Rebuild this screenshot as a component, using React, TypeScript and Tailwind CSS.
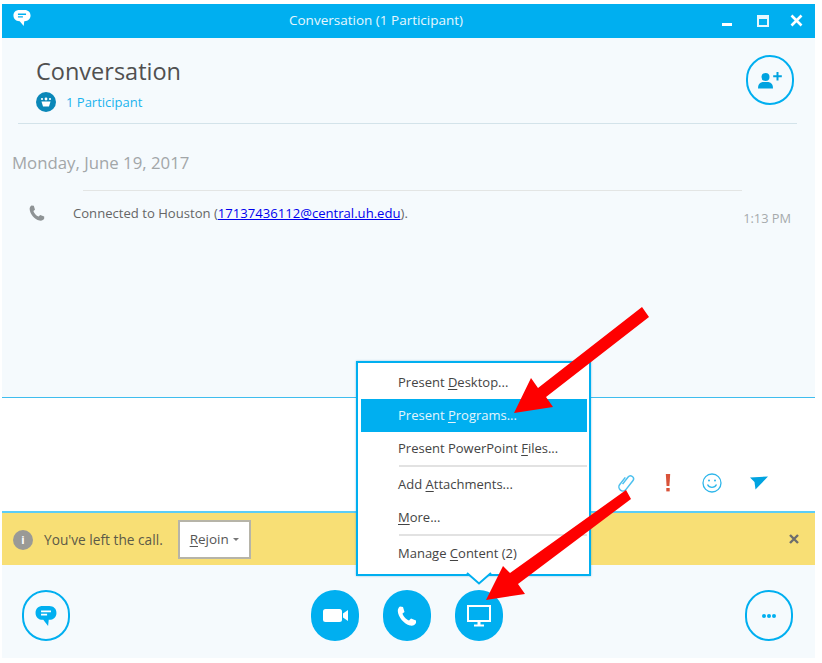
const BLUE = '#00aff0'

function ChatGlyph({ fill, lines, className }: { fill: string; lines: string; className?: string }) {
  return (
    <svg viewBox="0 0 20 20" className={className}>
      <path d="M7 1h6c3.800 0 6.500 2.500 6.500 6.200S16.800 13.500 13 13.500h-.5l-.6 5.500-4.400-5.500H7C3.200 13.500.5 11 .5 7.200S3.200 1 7 1z" fill={fill} />
      <path d="M5.500 5.800h9M5.500 8.800h5.500" stroke={lines} strokeWidth="1.500" fill="none" />
    </svg>
  )
}

function RoundButton({ filled, className, children }: { filled?: boolean; className?: string; children: React.ReactNode }) {
  return (
    <div
      className={
        filled
          ? 'flex h-[51px] w-[48px] shrink-0 items-center justify-center rounded-full bg-[#00aff0] ' + (className ?? '')
          : 'flex h-[51px] w-[48px] shrink-0 items-center justify-center rounded-full border-2 border-[#00aff0] ' + (className ?? '')
      }
    >
      {children}
    </div>
  )
}

function MenuItem({ pre, u, post, active, h }: { pre: string; u: string; post: string; active?: boolean; h: string }) {
  return (
    <div
      className={
        active
          ? 'flex items-center bg-[#00aff0] pl-[37px] pt-[1px] text-[#e3f5fd] ' + h
          : 'flex items-center pl-[37px] pt-[1px] text-[#444444] ' + h
      }
    >
      <span>
        {pre}
        <span className="underline underline-offset-2">{u}</span>
        {post}
      </span>
    </div>
  )
}

function PopupMenu() {
  return (
    <div className="absolute left-[356px] top-[361px] h-[215px] w-[235px] border-[2px] border-[#00aff0] bg-white p-[3px] pr-[2px] text-[13px] shadow-[0_0_2px_rgba(0,120,180,0.4)]">
      <MenuItem pre="Present " u="D" post="esktop..." h="h-[33px]" />
      <MenuItem pre="Present " u="P" post="rograms..." active h="h-[33px]" />
      <MenuItem pre="Present PowerPoint " u="F" post="iles..." h="h-[33px]" />
      <div className="ml-[38px] h-[2px] bg-[#e2e2e2]" />
      <MenuItem pre="Add " u="A" post="ttachments..." h="h-[34px]" />
      <MenuItem pre="" u="M" post="ore..." h="h-[33px]" />
      <div className="ml-[38px] h-[2px] bg-[#e2e2e2]" />
      <MenuItem pre="Manage " u="C" post="ontent (2)" h="h-[34px]" />
      {/* tail of the popup, over the bottom border */}
      <svg viewBox="0 0 26 13" className="absolute left-[108px] top-[209px] h-[13px] w-[26px]">
        <path d="M1 0 13 11.500 25 0z" fill="#ffffff" />
        <path d="M1 1 13 11.500 25 1" fill="none" stroke={BLUE} strokeWidth="2" />
      </svg>
    </div>
  )
}

function Arrows() {
  return (
    <svg viewBox="0 0 822 663" className="pointer-events-none absolute left-0 top-0 h-[663px] w-[822px]">
      <path d="M642 307 649 317 546 397 553 407 514 413 531 378 538 388z" fill="#fe0000" />
      <path d="M626 490 631 499 518 584 525 594 486 600 503 566 510 573z" fill="#fe0000" />
    </svg>
  )
}

export default function App() {
  return (
    <div
      className="relative h-[663px] w-[822px] overflow-hidden bg-white pl-[2px] pt-[4px] text-[#555555]"
      style={{ fontFamily: '"Open Sans", "Noto Sans", sans-serif' }}
    >
      <div className="flex h-[654px] w-[813px] flex-col bg-[#f5fafd]">
        {/* title bar */}
        <div className="relative flex h-[34px] shrink-0 items-center bg-[#00aff0] pb-[1px] pl-[287px] text-[13.500px] text-[#e6f7fe]">
          <ChatGlyph fill="#ffffff" lines="#00aff0" className="absolute left-[11px] top-[5px] h-[18px] w-[18px]" />
          <span>Conversation (1 Participant)</span>
          <div className="absolute left-[720px] top-[10px] flex items-center">
            <div className="mt-[7px] h-[3px] w-[10px] bg-white" />
            <div className="ml-[25px] h-[12px] w-[12px] border-2 border-t-[4px] border-[#e6f7fe]" />
            <svg viewBox="0 0 13 13" className="ml-[21px] h-[13px] w-[13px]">
              <path d="M1.500 1.500 11.500 11.500M11.500 1.500 1.500 11.500" stroke="#ffffff" strokeWidth="2.600" />
            </svg>
          </div>
        </div>

        {/* header */}
        <div className="ml-[16px] mr-[18px] flex h-[86px] shrink-0 items-start justify-between border-b border-[#d3e3ea]">
          <div className="pl-[18px] pt-[15px]">
            <div className="text-[23.500px] leading-[36px] text-[#505050]">Conversation</div>
            <div className="mt-[3px] flex items-center gap-[10px]">
              <div className="flex h-[20px] w-[20px] items-center justify-center rounded-full bg-[#0a87b8]">
                <svg viewBox="0 0 12 12" className="h-[12px] w-[12px]">
                  <circle cx="6" cy="3" r="1.400" fill="#fff" />
                  <circle cx="2" cy="3" r="1.100" fill="#fff" />
                  <circle cx="10" cy="3" r="1.100" fill="#fff" />
                  <path d="M1.500 5.500h9l-1.500 5h-6z" fill="#fff" />
                </svg>
              </div>
              <span className="text-[13px] leading-[18px] text-[#19b3ee]">1 Participant</span>
            </div>
          </div>
          <div className="mr-[3px] mt-[17px] flex h-[50px] w-[48px] items-center justify-center rounded-full border-2 border-[#00aff0]">
            <svg viewBox="0 0 26 18" className="h-[18px] w-[26px]">
              <circle cx="8.500" cy="6" r="4" fill="#00a3e0" />
              <path d="M1 17.500c0-4 1.500-6 4.500-6.500h6c3 .5 4.500 2.500 4.500 6.500z" fill="#00a3e0" />
              <path d="M20.500 1v8.500M16.200 5.200h8.600" stroke="#00a3e0" strokeWidth="2" />
            </svg>
          </div>
        </div>

        {/* messages */}
        <div className="h-[274px] shrink-0 border-b border-[#3fbdee]">
          <div className="pl-[10px] pt-[26px] text-[16.800px] leading-[26px] text-[#a2a6a8]">Monday, June 19, 2017</div>
          <div className="ml-[81px] mr-[73px] mt-[14px] h-px bg-[#e3e5e4]" />
          <div className="flex items-start pl-[27px] pr-[24px] pt-[14px]">
            <svg viewBox="0 0 20 20" className="h-[16px] w-[16px] shrink-0" fill="#8e9395">
              <path d="M3 .5 6 1l1.500 5-2 1.500c.5 2.500 3.500 6 6.500 7l2-2 5 2V17c-1 2-3 3-6 2.500C7 18 1 11 .8 5 .8 3 1.500 1.500 3 .5z" />
            </svg>
            <div className="ml-[28px] flex-1 text-[13.100px] leading-[17px] text-[#666666]">
              Connected to Houston (<span className="text-[#0000ee] underline">17137436112@central.uh.edu</span>).
            </div>
            <div className="mt-[5px] text-[12.800px] leading-[17px] text-[#a6aaac]">1:13 PM</div>
          </div>
        </div>

        {/* compose box */}
        <div className="flex h-[115px] shrink-0 items-start justify-end border-b-2 border-[#5bcdf7] bg-white pr-[47px] pt-[75px]">
          <div className="flex items-center">
            <svg viewBox="0 0 18 20" className="h-[20px] w-[18px]" fill="none" stroke="#4cc0ee" strokeWidth="1.500">
              <g transform="rotate(38 9 10)">
                <path d="M5 6v9a4 4 0 0 0 8 0V4a3 3 0 0 0-6 0v9" />
              </g>
            </svg>
            <svg viewBox="0 0 6 18" className="ml-[30px] h-[18px] w-[6px]" fill="#d9533a">
              <path d="M.8 0h4.400l-.8 12H1.600z" />
              <rect x="1.300" y="14" width="3.400" height="3.400" />
            </svg>
            <svg viewBox="0 0 20 20" className="ml-[31px] h-[20px] w-[20px]" fill="none" stroke="#2fb6ea" strokeWidth="1.300">
              <circle cx="10" cy="10" r="9" />
              <path d="M5.500 11.500c1.800 3.800 7.200 3.800 9 0" />
              <circle cx="7" cy="7.500" r="1" fill="#2fb6ea" stroke="none" />
              <circle cx="13" cy="7.500" r="1" fill="#2fb6ea" stroke="none" />
            </svg>
            <svg viewBox="0 0 18 14" className="ml-[28px] h-[14px] w-[18px]" fill="#00a3e0">
              <path d="M0 1.500 18 .5 5.500 13.500 4.500 6z" />
            </svg>
          </div>
        </div>

        {/* call notice */}
        <div className="relative flex h-[52px] shrink-0 items-center bg-[#f8df75] pl-[11px] pr-[16px]">
          <div className="mt-[1px] flex h-[20px] w-[20px] items-center justify-center rounded-full bg-[#9a9a96] text-[11px] font-bold leading-none text-white">i</div>
          <span className="ml-[11px] pt-[3px] text-[13.700px] text-[#5c5a48]">You've left the call.</span>
          <div className="ml-[15px] flex h-[39px] w-[73px] items-center justify-center border-2 border-[#b6b4a8] bg-white pt-[1px] text-[13.500px] text-[#555555]">
            <span>
              <span className="underline underline-offset-2">R</span>ejoin
            </span>
            <span className="ml-[4px] h-0 w-0 border-x-[3px] border-t-[3px] border-x-transparent border-t-[#777777]" />
          </div>
          <svg viewBox="0 0 10 10" className="ml-auto h-[10px] w-[10px]">
            <path d="M1 1 9 9M9 1 1 9" stroke="#6d6d6d" strokeWidth="2.400" />
          </svg>
        </div>

        {/* bottom toolbar */}
        <div className="flex flex-1 items-start pl-[20px] pr-[22px] pt-[25px]">
          <RoundButton>
            <ChatGlyph fill="#00aff0" lines="#ffffff" className="h-[22px] w-[22px]" />
          </RoundButton>
          <RoundButton filled className="ml-[241px]">
            <svg viewBox="0 0 25 13" className="h-[13px] w-[25px]" fill="#ffffff">
              <rect x="0" y="0" width="19" height="13" rx="2.500" />
              <path d="M20 4.500 25 1v11l-5-3.500z" />
            </svg>
          </RoundButton>
          <RoundButton filled className="ml-[24px]">
            <svg viewBox="0 0 20 20" className="h-[20px] w-[20px]" fill="#ffffff">
              <path d="M3 .5 6 1l1.500 5-2 1.500c.5 2.500 3.500 6 6.500 7l2-2 5 2V17c-1 2-3 3-6 2.500C7 18 1 11 .8 5 .8 3 1.500 1.500 3 .5z" />
            </svg>
          </RoundButton>
          <RoundButton filled className="ml-[24px]">
            <svg viewBox="0 0 24 22" className="h-[22px] w-[24px]" fill="none" stroke="#ffffff">
              <rect x="1" y="1" width="22" height="15" strokeWidth="2" />
              <path d="M12 16v4" strokeWidth="3" />
              <path d="M7 20.500h10" strokeWidth="2" />
            </svg>
          </RoundButton>
          <RoundButton className="ml-auto">
            <div className="flex gap-[1px]">
              <div className="h-[4px] w-[4px] rounded-full bg-[#00aff0]" />
              <div className="h-[4px] w-[4px] rounded-full bg-[#00aff0]" />
              <div className="h-[4px] w-[4px] rounded-full bg-[#00aff0]" />
            </div>
          </RoundButton>
        </div>
      </div>

      <PopupMenu />
      <Arrows />
    </div>
  )
}
